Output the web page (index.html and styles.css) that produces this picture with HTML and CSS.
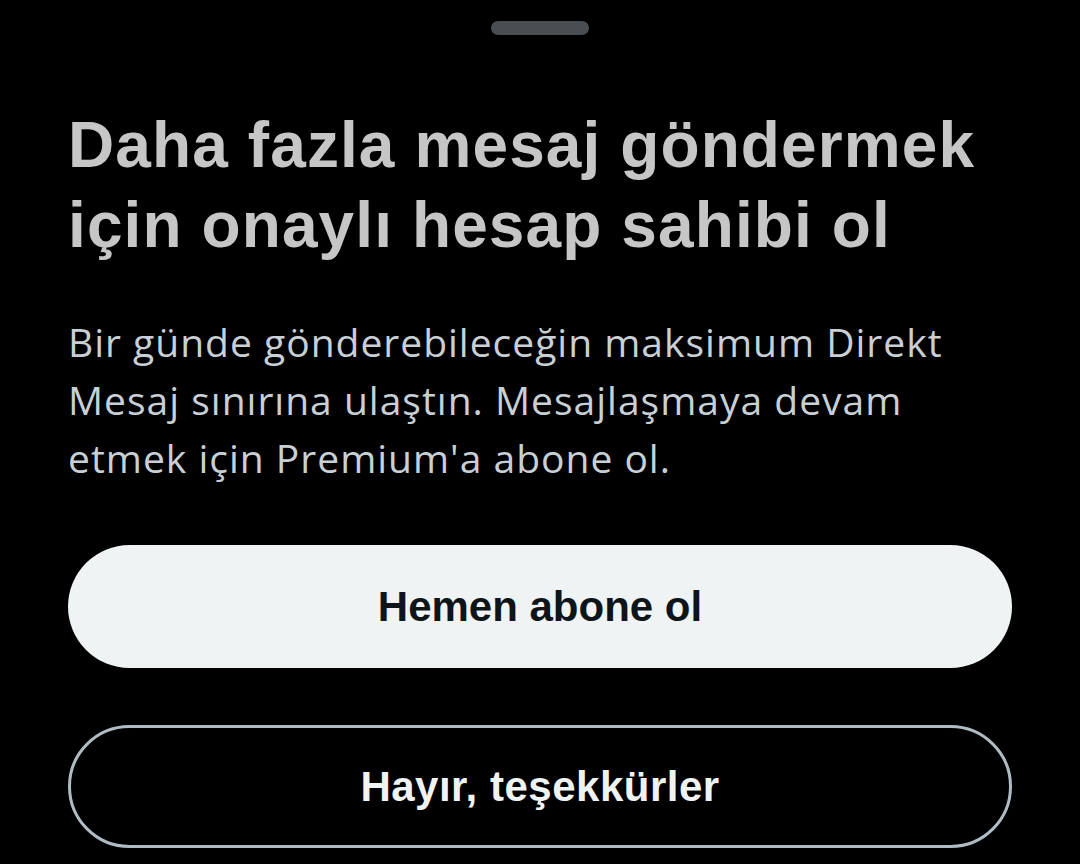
FILE: index.html
```html
<!DOCTYPE html>
<html lang="tr">
<head>
<meta charset="utf-8">
<link rel="stylesheet" href="styles.css">
</head>
<body>
<div class="sheet">
  <div class="handle"></div>
  <h1 class="title">Daha fazla mesaj göndermek için onaylı hesap sahibi ol</h1>
  <p class="desc">Bir günde gönderebileceğin maksimum Direkt Mesaj sınırına ulaştın. Mesajlaşmaya devam etmek için Premium'a abone ol.</p>
  <div class="actions">
    <button class="btn btn-primary">Hemen abone ol</button>
    <button class="btn btn-outline">Hayır, teşekkürler</button>
  </div>
</div>
</body>
</html>
```
FILE: styles.css
```css
html, body {
  margin: 0;
  padding: 0;
  background: #000;
}
body {
  width: 1080px;
  height: 864px;
  overflow: hidden;
  font-family: "Liberation Sans", Arial, sans-serif;
}
.sheet {
  padding: 21px 68px 0 68px;
  display: flex;
  flex-direction: column;
}
.handle {
  align-self: center;
  width: 98px;
  height: 14px;
  border-radius: 7px;
  background: #4a4e52;
}
.title {
  margin: 70px 0 0 0;
  font-size: 64px;
  line-height: 80px;
  font-weight: 700;
  color: #c6c6c6;
  letter-spacing: 1.1px;
}
.desc {
  margin: 48px 0 0 0;
  font-family: "Open Sans", "Liberation Sans", sans-serif;
  font-size: 39px;
  line-height: 58px;
  color: #c8d0d6;
  letter-spacing: 1px;
}
.actions {
  margin-top: 58px;
  display: flex;
  flex-direction: column;
  gap: 57px;
}
.btn {
  height: 123px;
  border-radius: 62px;
  font-family: "Liberation Sans", Arial, sans-serif;
  font-size: 42px;
  font-weight: 700;
  cursor: pointer;
}
.btn-primary {
  background: #eff3f4;
  color: #0f1419;
  border: none;
}
.btn-outline {
  background: #000;
  color: #eff3f4;
  border: 3px solid #b0bcc4;
  letter-spacing: 0.5px;
}
```
